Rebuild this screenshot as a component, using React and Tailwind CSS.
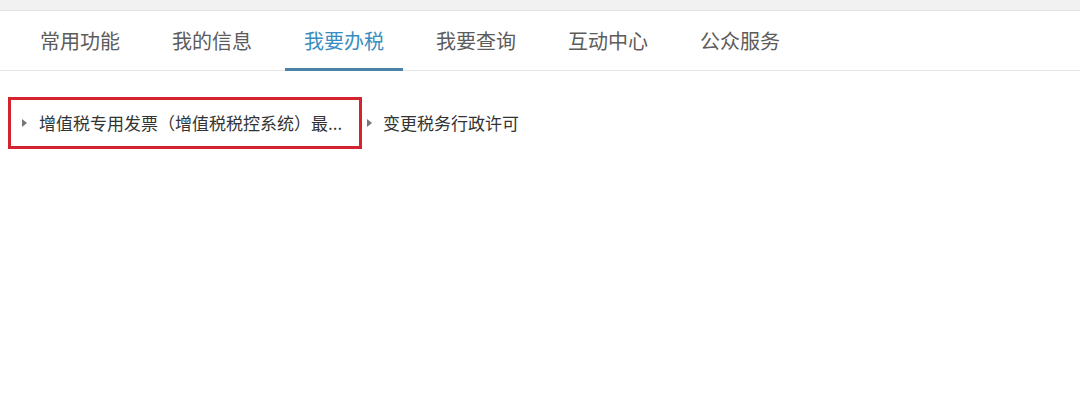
const tabs = ["常用功能", "我的信息", "我要办税", "我要查询", "互动中心", "公众服务"];

function Caret() {
  return (
    <svg width="5" height="8" viewBox="0 0 5 8" className="shrink-0">
      <path d="M0 0 L5 4 L0 8 Z" fill="#777" />
    </svg>
  );
}

export default function App() {
  const active = "我要办税";

  return (
    <div
      className="w-[1080px] h-[402px] bg-white overflow-hidden"
      style={{ fontFamily: '"Noto Sans CJK SC", "Noto Sans", sans-serif' }}
    >
      {/* top strip */}
      <div className="h-[11px] bg-[#f1f1f1] border-b border-[#e2e2e2]" />

      {/* tab bar */}
      <div className="h-[60px] flex pl-[21px] gap-[14px] border-b border-[#e8e8e8]">
        {tabs.map((t) => (
          <div
            key={t}
            className={
              "relative w-[118px] flex items-center justify-center pt-[1px] text-[20px] " +
              (t === active ? "text-[#3a8dc0]" : "text-[#5c5c5c]")
            }
          >
            {t}
            {t === active && (
              <div className="absolute left-0 right-0 bottom-[-1px] h-[3px] bg-[#4a83a6]" />
            )}
          </div>
        ))}
      </div>

      {/* items */}
      <div className="flex items-center pt-[26px] pl-[8px]">
        <div className="w-[354px] h-[52px] border-[3px] border-[#d2232f] flex items-center pl-[11px] text-[17px] text-[#333]">
          <Caret />
          <span className="ml-[12px] whitespace-nowrap">增值税专用发票（增值税税控系统）最...</span>
        </div>
        <div className="flex items-center ml-[5px] text-[17px] text-[#333]">
          <Caret />
          <span className="ml-[11px]">变更税务行政许可</span>
        </div>
      </div>
    </div>
  );
}
